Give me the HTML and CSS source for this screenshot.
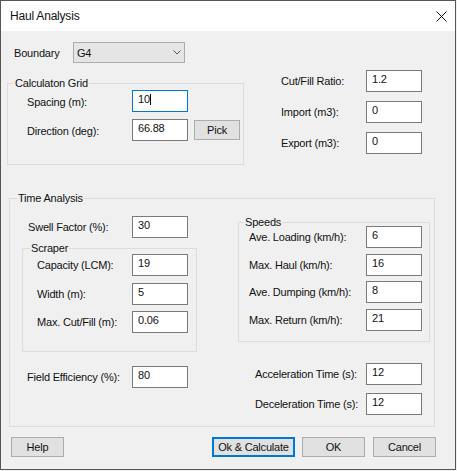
FILE: index.html
```html
<!DOCTYPE html>
<html>
<head>
<meta charset="utf-8">
<title>Haul Analysis</title>
<link rel="stylesheet" href="styles.css">
</head>
<body>
<div class="window">
  <div class="titlebar">
    <span class="title">Haul Analysis</span>
    <svg class="close" width="11" height="11" viewBox="0 0 11 11"><path d="M0.5 0.5 L10.5 10.5 M10.5 0.5 L0.5 10.5" stroke="#111" stroke-width="1" fill="none"/></svg>
  </div>

  <div class="boundary-row">
    <span class="boundary-label">Boundary</span>
    <div class="combo">
      <span>G4</span>
      <svg width="8" height="5" viewBox="0 0 8 5"><path d="M0.5 0.5 L4 4 L7.5 0.5" stroke="#555" stroke-width="1" fill="none"/></svg>
    </div>
  </div>

  <div class="top">
    <div class="group calc">
      <div class="group-title">Calculaton Grid</div>
      <div class="row">
        <span class="label w-calc low">Spacing (m):</span>
        <span class="field focused">10<span class="caret"></span></span>
      </div>
      <div class="row row-calc2">
        <span class="label w-calc low">Direction (deg):</span>
        <span class="field">66.88</span>
        <span class="btn pick">Pick</span>
      </div>
    </div>

    <div class="right-top">
      <div class="row">
        <span class="label w-rt">Cut/Fill Ratio:</span>
        <span class="field">1.2</span>
      </div>
      <div class="row">
        <span class="label w-rt">Import (m3):</span>
        <span class="field">0</span>
      </div>
      <div class="row">
        <span class="label w-rt">Export (m3):</span>
        <span class="field">0</span>
      </div>
    </div>
  </div>

  <div class="group time">
    <div class="group-title">Time Analysis</div>
    <div class="time-body">
      <div class="time-left">
        <div class="row swell">
          <span class="label w-swell">Swell Factor (%):</span>
          <span class="field">30</span>
        </div>
        <div class="group scraper">
          <div class="group-title">Scraper</div>
          <div class="row">
            <span class="label w-scr">Capacity (LCM):</span>
            <span class="field">19</span>
          </div>
          <div class="row">
            <span class="label w-scr">Width (m):</span>
            <span class="field">5</span>
          </div>
          <div class="row">
            <span class="label w-scr">Max. Cut/Fill (m):</span>
            <span class="field">0.06</span>
          </div>
        </div>
        <div class="row field-eff">
          <span class="label w-fe">Field Efficiency (%):</span>
          <span class="field">80</span>
        </div>
      </div>

      <div class="time-right">
        <div class="group speeds">
          <div class="group-title">Speeds</div>
          <div class="row">
            <span class="label w-sp">Ave. Loading (km/h):</span>
            <span class="field">6</span>
          </div>
          <div class="row">
            <span class="label w-sp">Max. Haul (km/h):</span>
            <span class="field">16</span>
          </div>
          <div class="row">
            <span class="label w-sp">Ave. Dumping (km/h):</span>
            <span class="field">8</span>
          </div>
          <div class="row">
            <span class="label w-sp">Max. Return (km/h):</span>
            <span class="field">21</span>
          </div>
        </div>
        <div class="row accel">
          <span class="label w-acc">Acceleration Time (s):</span>
          <span class="field">12</span>
        </div>
        <div class="row decel">
          <span class="label w-acc">Deceleration Time (s):</span>
          <span class="field">12</span>
        </div>
      </div>
    </div>
  </div>

  <div class="buttons">
    <span class="btn help">Help</span>
    <span class="btn default calc-btn">Ok &amp; Calculate</span>
    <span class="btn ok">OK</span>
    <span class="btn cancel">Cancel</span>
  </div>
</div>
</body>
</html>
```

FILE: styles.css
```css
html, body {
  margin: 0;
  padding: 0;
  background: #f0f0f0;
}

.window {
  width: 456px;
  height: 470px;
  box-sizing: border-box;
  border: 1px solid #555555;
  background: #f0f0f0;
  font-family: "Liberation Sans", Arial, sans-serif;
  font-size: 11px;
  letter-spacing: -0.2px;
  color: #111;
  overflow: hidden;
}

.titlebar {
  height: 30px;
  background: #ffffff;
  display: flex;
  align-items: center;
  justify-content: space-between;
  padding-left: 9px;
  font-size: 12px;
}

.close {
  margin-right: 8px;
  display: block;
}

.boundary-row {
  display: flex;
  align-items: center;
  margin: 11px 0 0 13px;
  height: 21px;
}

.boundary-label {
  width: 59px;
}

.combo {
  width: 112px;
  height: 21px;
  box-sizing: border-box;
  border: 1px solid #adadad;
  background: #e5e5e5;
  display: flex;
  align-items: center;
  justify-content: space-between;
  padding: 0 3px 0 3px;
}

.combo svg {
  display: block;
}

.top {
  display: flex;
  align-items: flex-start;
}

.group {
  box-sizing: border-box;
  border: 1px solid #dcdcdc;
}

.group-title {
  display: table;
  margin-top: -7px;
  line-height: 13px;
  padding: 0 1px;
  background: #f0f0f0;
}

.row {
  display: flex;
  align-items: center;
  height: 22px;
}

.label {
  line-height: 13px;
  white-space: nowrap;
}

.low {
  padding-top: 2px;
}

.field {
  width: 56px;
  height: 22px;
  box-sizing: border-box;
  border: 1px solid #7a7a7a;
  background: #ffffff;
  padding: 0 5px;
  line-height: 16px;
  display: block;
  white-space: nowrap;
}

.field.focused {
  border-color: #0078d7;
}

.caret {
  display: inline-block;
  width: 1px;
  height: 11px;
  background: #000;
  vertical-align: -2px;
}

.btn {
  height: 20px;
  box-sizing: border-box;
  border: 1px solid #adadad;
  background: #e1e1e1;
  display: flex;
  align-items: center;
  justify-content: center;
  line-height: 13px;
}

.btn.default {
  border: 2px solid #0078d7;
}

/* Calculation grid */
.calc {
  margin: 20px 0 0 6px;
  width: 237px;
  height: 82px;
}

.calc .group-title {
  margin-left: 6px;
}

.calc .row {
  margin-left: 19px;
}

.w-calc {
  width: 105px;
}

.row-calc2 {
  margin-top: 7px;
}

.pick {
  width: 46px;
  margin-left: 6px;
}

/* Right top column */
.right-top {
  margin: 7px 0 0 37px;
}

.right-top .row + .row {
  margin-top: 9px;
}

.w-rt {
  width: 85px;
}

/* Time analysis */
.time {
  margin: 33px 0 0 8px;
  width: 426px;
  height: 229px;
}

.time > .group-title {
  margin-left: 7px;
}

.time-body {
  display: flex;
  align-items: flex-start;
}

.time-left {
  width: 187px;
}

.swell {
  margin: 11px 0 0 18px;
}

.w-swell {
  width: 104px;
}

.scraper {
  margin: 10px 0 0 12px;
  width: 175px;
  height: 104px;
}

.scraper .group-title {
  margin-left: 7px;
  margin-bottom: -1px;
}

.scraper .row {
  margin-left: 14px;
}

.scraper .row + .row {
  margin-top: 7px;
}

.scraper .row:last-child {
  margin-top: 6px;
}

.w-scr {
  width: 95px;
}

.field-eff {
  margin: 14px 0 0 17px;
}

.w-fe {
  width: 105px;
}

.time-right {
  margin-left: 41px;
}

.speeds {
  margin-top: 17px;
  width: 192px;
  height: 120px;
}

.speeds .group-title {
  margin-left: 5px;
  margin-bottom: -3px;
}

.speeds .row {
  margin-left: 10px;
}

.speeds .row + .row {
  margin-top: 6px;
}

.speeds .row:nth-child(4) {
  margin-top: 5px;
}

.w-sp {
  width: 117px;
}

.accel {
  margin: 21px 0 0 17px;
}

.decel {
  margin: 8px 0 0 17px;
}

.w-acc {
  width: 111px;
}

/* Buttons */
.buttons {
  display: flex;
  margin-top: 10px;
}

.help {
  margin-left: 10px;
  width: 53px;
}

.calc-btn {
  margin-left: 148px;
  width: 83px;
}

.ok {
  margin-left: 7px;
  width: 63px;
}

.cancel {
  margin-left: 8px;
  width: 63px;
}
```
